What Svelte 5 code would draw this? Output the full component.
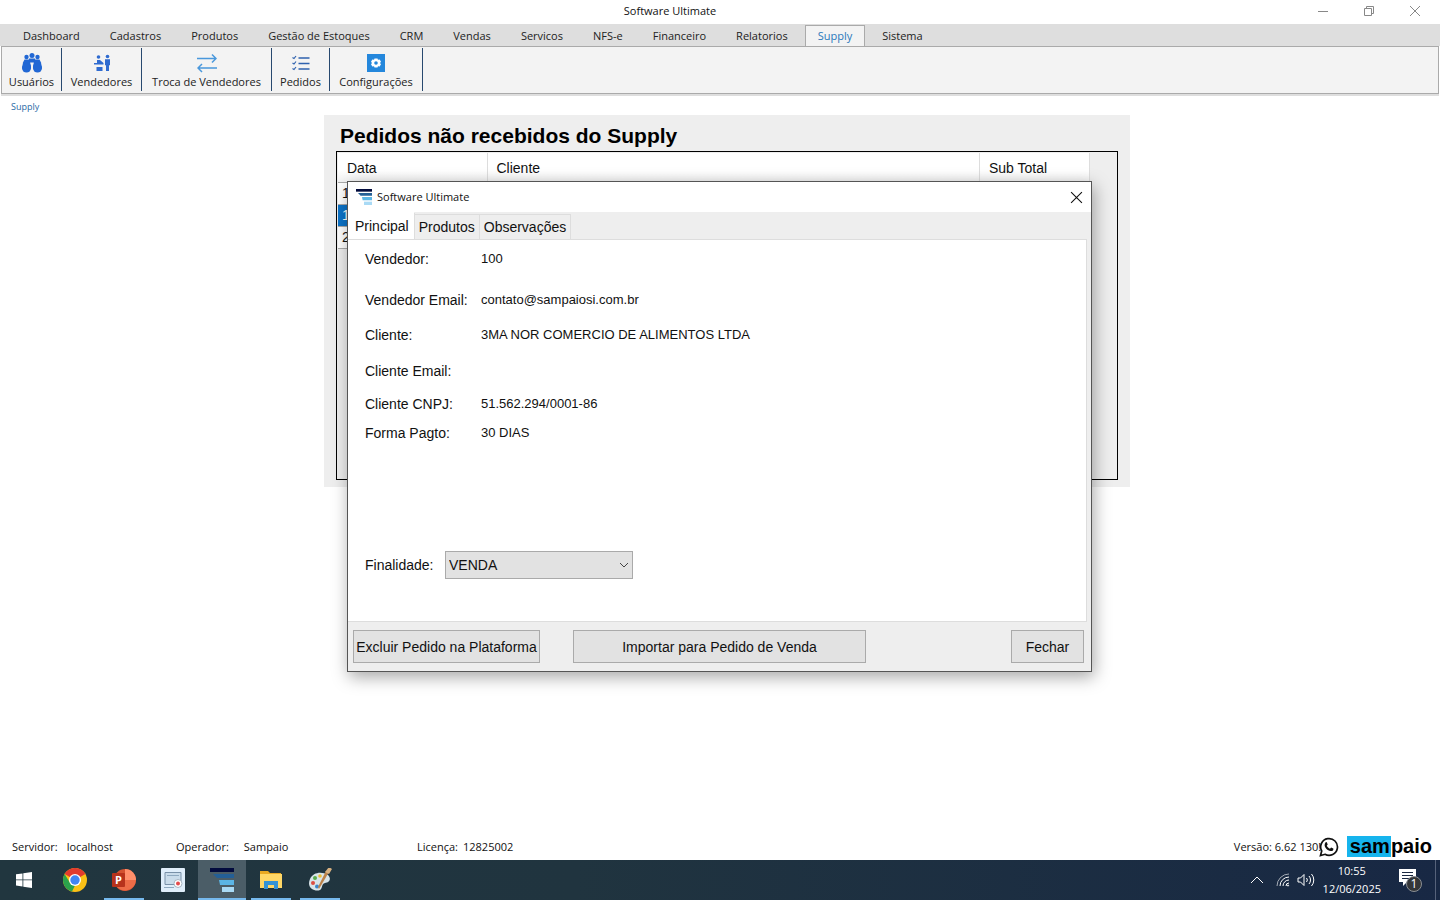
<script lang="ts">
	type Order = { date: string; client: string; subtotal: string }

	const menus = [
		'Dashboard',
		'Cadastros',
		'Produtos',
		'Gestão de Estoques',
		'CRM',
		'Vendas',
		'Servicos',
		'NFS-e',
		'Financeiro',
		'Relatorios',
		'Supply',
		'Sistema'
	]

	const tools = ['Usuários', 'Vendedores', 'Troca de Vendedores', 'Pedidos', 'Configurações']

	const orders: Order[] = [
		{ date: '1', client: '', subtotal: '' },
		{ date: '1', client: '', subtotal: '' },
		{ date: '2', client: '', subtotal: '' }
	]

	const fields = [
		['Vendedor:', '100'],
		['Vendedor Email:', 'contato@sampaiosi.com.br'],
		['Cliente:', '3MA NOR COMERCIO DE ALIMENTOS LTDA'],
		['Cliente Email:', ''],
		['Cliente CNPJ:', '51.562.294/0001-86'],
		['Forma Pagto:', '30 DIAS']
	]

	const tabs = ['Principal', 'Produtos', 'Observações']

	let activeMenu = $state('Supply')
	let activeTab = $state('Principal')
	let selected = $state(1)
	let open = $state(true)
	let purpose = $state('VENDA')
</script>

{#snippet appLogo()}
	<svg class="app-logo" viewBox="0 0 24 24" aria-hidden="true">
		<path fill="#020b3d" d="M0 0h24v4H0z" />
		<path fill="#245f96" d="M3 6h21v4H7z" />
		<path fill="#5bb5e5" d="M9 12h15v5H10z" />
		<path fill="#a9daf5" d="M12 19h12v5H12z" />
	</svg>
{/snippet}

<div class="screen">
	<header class="titlebar">
		<h1>Software Ultimate</h1>
		<div class="window-controls">
			<button aria-label="Minimizar">
				<svg viewBox="0 0 12 12"><path d="M1 6.5h10" /></svg>
			</button>
			<button aria-label="Restaurar">
				<svg viewBox="0 0 12 12"><path d="M1.5 3.5h7v7h-7zM3.5 3.5v-2h7v7h-2" /></svg>
			</button>
			<button aria-label="Fechar janela">
				<svg viewBox="0 0 12 12"><path d="M1 1l10 10M11 1L1 11" /></svg>
			</button>
		</div>
	</header>

	<nav class="menu">
		{#each menus as menu}
			<button class:active={menu === activeMenu} onclick={() => (activeMenu = menu)}>{menu}</button>
		{/each}
	</nav>

	<div class="toolbar">
		{#each tools as tool, i}
			<button>
				{#if i === 0}
					<svg viewBox="0 0 20 20" fill="#2167d4">
						<circle cx="4.5" cy="4" r="2.2" />
						<circle cx="10" cy="2.6" r="2.5" />
						<circle cx="15.5" cy="4" r="2.2" />
						<path d="M7 5.5h6v5l-1.5-1h-3L7 10.5z" />
						<path d="M2.5 6.5H7l2 6v3H0l1-6z" />
						<path d="M17.5 6.5H13l-2 6v3h9l-1-6z" />
						<circle cx="4.5" cy="15" r="4.5" />
						<circle cx="15.5" cy="15" r="4.5" />
					</svg>
				{:else if i === 1}
					<svg viewBox="0 0 20 20" fill="#2f6bd0">
						<circle cx="6.5" cy="4" r="1.8" />
						<path d="M5 7h3l3.5 3v1.5H2V10h3zM4.5 14h6v4h-6z" />
						<circle cx="15.5" cy="3.5" r="1.8" />
						<path d="M13 6.2h5v6h-1V18h-3v-5.8h-1z" />
					</svg>
				{:else if i === 2}
					<svg viewBox="0 0 20 20" fill="none" stroke="#4a98dc" stroke-width="1.5">
						<path d="M0 5.5h19M15 1.5l4 4-4 4M20 15H1M5 11l-4 4 4 4" />
					</svg>
				{:else if i === 3}
					<svg viewBox="0 0 20 20" fill="none" stroke="#2f62ae" stroke-width="1.6">
						<path d="M7.5 5h11M7.5 10.5h11M7.5 16h11" />
						<path d="M1.5 4.5l1.5 1 2-2.5M1.5 10l1.5 1 2-2.5M1.5 15.5l1.5 1 2-2.5" stroke-width="1.2" />
					</svg>
				{:else}
					<svg viewBox="0 0 20 20">
						<path fill="#2487dc" d="M1 1h18v18H1z" />
						<path fill="#fff" d="M8.5 5.500h3l.5 1.200 1.700-.2L15 8.800 14 10l1 1.200-1.300 2.300-1.700-.2-.5 1.200h-3L8 13.300l-1.700.2L5 11.200 6 10 5 8.800l1.300-2.300 1.700.2z" />
						<circle cx="10" cy="10" r="1.8" fill="#2487dc" />
					</svg>
				{/if}
				<span>{tool}</span>
			</button>
		{/each}
	</div>

	<main>
		<a class="crumb" href="#supply">Supply</a>

		<section class="orders">
			<h2>Pedidos não recebidos do Supply</h2>
			<div class="grid-box">
				<table>
					<thead>
						<tr>
							<th class="date">Data</th>
							<th>Cliente</th>
							<th class="subtotal">Sub Total</th>
						</tr>
					</thead>
					<tbody>
						{#each orders as order, i}
							<tr class:selected={i === selected} onclick={() => (selected = i)}>
								<td>{order.date}</td>
								<td>{order.client}</td>
								<td>{order.subtotal}</td>
							</tr>
						{/each}
					</tbody>
				</table>
			</div>
		</section>
	</main>

	<footer class="status">
		<dl>
			<div class="server"><dt>Servidor:</dt><dd>localhost</dd></div>
			<div class="operator"><dt>Operador:</dt><dd>Sampaio</dd></div>
			<div class="license"><dt>Licença:</dt><dd>12825002</dd></div>
		</dl>
		<span class="version">Versão: 6.62 130!</span>
		<svg class="whatsapp" viewBox="0 0 20 20" aria-label="WhatsApp" role="img">
			<path d="M1.5 18.5l1.200-4.500a8.400 8.400 0 1 1 3.300 3.300z" fill="#fff" stroke="#111" stroke-width="1.7" />
			<path d="M6.5 5.500c.8-.8 1.300-.3 1.500.3l.7 1.700-.9 1.300c.7 1.400 1.800 2.300 3.200 2.900l1.100-1.200 2.200 1c.6 1.900-1.300 2.800-2.700 2.500-3.200-.6-5.700-3.200-6-5.800 0-1.100.3-2.100.9-2.700z" fill="#111" />
		</svg>
		<span class="brand"><b>sam</b>paio</span>
	</footer>

	<div class="taskbar">
		<button class="start" aria-label="Iniciar">
			<svg viewBox="0 0 16 16" fill="#fff">
				<path d="M0 2.300l6.500-.9v6.100H0zM7.300 1.300L16 0v7.500H7.300zM0 8.300h6.500v6.200L0 13.600zM7.300 8.300H16V16l-8.700-1.300z" />
			</svg>
		</button>
		<button aria-label="Chrome">
			<svg viewBox="0 0 24 24">
				<circle cx="12" cy="12" r="12" fill="#fbc116" />
				<path d="M12 12L1.600 6A12 12 0 0 1 22.400 6z" fill="#e33b2e" />
				<path d="M1.600 6l5.800 9.500 4.600 2-3 6.100A12 12 0 0 1 1.600 6z" fill="#2ba24c" />
				<circle cx="12" cy="12" r="6" fill="#fff" />
				<circle cx="12" cy="12" r="4.7" fill="#4285f4" />
			</svg>
		</button>
		<button class="running" aria-label="PowerPoint">
			<svg viewBox="0 0 24 24">
				<circle cx="13" cy="12" r="11" fill="#d35230" />
				<path d="M13 1a11 11 0 0 1 11 11H13z" fill="#ff8f6b" />
				<path d="M13 12h11a11 11 0 0 1-21 4z" fill="#ed6c47" />
				<rect y="5" width="13" height="14" rx="1" fill="#b7331c" />
				<text x="3" y="16" fill="#fff" font-size="11" font-weight="700">P</text>
			</svg>
		</button>
		<button aria-label="Captura">
			<svg viewBox="0 0 24 24">
				<rect width="24" height="24" rx="1" fill="#dfeefa" />
				<path d="M4 4.500h16v12H4z" fill="#c9dcea" stroke="#7891a8" />
				<path d="M6 7.500h12M3 19.500h10" stroke="#8ea9bf" />
				<circle cx="17" cy="15.5" r="4" fill="#fff" stroke="#a5b4c2" />
				<circle cx="17" cy="15.5" r="2" fill="#e34b4b" />
			</svg>
		</button>
		<button class="running current" aria-label="Software Ultimate">{@render appLogo()}</button>
		<button class="running" aria-label="Explorador">
			<svg viewBox="0 0 24 24">
				<path d="M1 3h8l2 2h11v4H1z" fill="#e9a922" />
				<path d="M1 6h22v14H1z" fill="#ffd766" />
				<path d="M5 21v-8h14v8h-4v-4H9v4z" fill="#3493d5" />
			</svg>
		</button>
		<button class="running" aria-label="Paint">
			<svg viewBox="0 0 24 24">
				<path d="M2 11C5 4 14 3 20 7c4 4 1 8-3 8-4 1-2 5-5 7-5 2-14-2-10-11z" fill="#d8e4e9" />
				<circle cx="7" cy="10" r="2" fill="#59ac4c" />
				<circle cx="12" cy="8" r="1.8" fill="#efbd32" />
				<circle cx="5" cy="15" r="2" fill="#dc4d42" />
				<circle cx="9" cy="18.5" r="2" fill="#3d86cd" />
				<path d="M21 4L11 21l-1-2L18 3z" fill="#bc8249" />
				<path d="M17 4l4-5 3 2-3 5z" fill="#d7b080" />
			</svg>
		</button>

		<div class="tray">
			<svg class="chevron" viewBox="0 0 12 12"><path d="M0 9l6-6 6 6" /></svg>
			<svg class="network" viewBox="0 0 14 14">
				<path d="M1 13A12 12 0 0 1 13 1" opacity=".6" />
				<path d="M4 13a9 9 0 0 1 9-9M7 13a6 6 0 0 1 6-6M10 13a3 3 0 0 1 3-3" />
				<circle cx="12" cy="12.5" r=".6" />
			</svg>
			<svg class="sound" viewBox="0 0 18 14">
				<path d="M1 5h2.500L7 1.500v11L3.500 9H1zM9.500 5a3 3 0 0 1 0 4M12 3a6 6 0 0 1 0 8M14.500 1a9 9 0 0 1 0 12" />
			</svg>
			<time datetime="2025-06-12T10:55">10:55<br />12/06/2025</time>
			<button class="notices" aria-label="Notificações">
				<svg viewBox="0 0 24 24">
					<path d="M0 1h17v13H8l-4 4v-4H0z" fill="#fff" />
					<path d="M3 4.500h11M3 7.500h11M3 10.500h7" stroke="#1b2942" />
					<circle cx="15" cy="16" r="7.5" fill="#343638" stroke="#8b8f94" />
					<text x="15" y="20" fill="#fff" font-size="12" text-anchor="middle">1</text>
				</svg>
			</button>
			<button class="show-desktop" aria-label="Mostrar área de trabalho"></button>
		</div>
	</div>

	{#if open}
		<div class="dialog" role="dialog" aria-labelledby="dialog-title">
			<div class="dialog-title">
				{@render appLogo()}
				<span id="dialog-title">Software Ultimate</span>
				<button aria-label="Fechar diálogo" onclick={() => (open = false)}>
					<svg viewBox="0 0 12 12"><path d="M1 1l10 10M11 1L1 11" /></svg>
				</button>
			</div>

			<div class="tabs" role="tablist">
				{#each tabs as tab}
					<button
						role="tab"
						aria-selected={tab === activeTab}
						class:active={tab === activeTab}
						onclick={() => (activeTab = tab)}>{tab}</button
					>
				{/each}
			</div>

			<div class="panel" role="tabpanel">
				{#if activeTab === 'Principal'}
					<dl class="fields">
						{#each fields as [name, value]}
							<dt>{name}</dt>
							<dd>{value}</dd>
						{/each}
					</dl>
					<div class="purpose">
						<label for="purpose">Finalidade:</label>
						<div class="select">
							<select id="purpose" bind:value={purpose}>
								<option>VENDA</option>
							</select>
							<svg viewBox="0 0 10 10"><path d="M1 3l4 4 4-4" /></svg>
						</div>
					</div>
				{/if}
			</div>

			<div class="actions">
				<button class="remove">Excluir Pedido na Plataforma</button>
				<button class="import">Importar para Pedido de Venda</button>
				<button class="close" onclick={() => (open = false)}>Fechar</button>
			</div>
		</div>
	{/if}
</div>

<style>
	:global(body) {
		margin: 0;
	}

	.screen {
		position: relative;
		display: flex;
		flex-direction: column;
		min-height: 100vh;
		background: #fff;
		color: #111;
		font: 11px/16px 'Open Sans', 'Noto Sans', sans-serif;
	}

	.screen * {
		box-sizing: border-box;
	}

	button {
		margin: 0;
		padding: 0;
		border: 0;
		background: none;
		color: inherit;
		font: inherit;
	}

	dl,
	dd,
	h1,
	h2 {
		margin: 0;
	}

	svg {
		display: block;
		flex: none;
	}

	.titlebar {
		display: flex;
		align-items: center;
		height: 24px;
		padding: 0 2px 2px 40px;
	}

	.titlebar h1 {
		flex: 1;
		font-size: 11px;
		font-weight: 400;
		text-align: center;
	}

	.window-controls {
		display: flex;
	}

	.window-controls button {
		display: grid;
		place-items: center;
		width: 46px;
		height: 22px;
	}

	.window-controls svg {
		width: 12px;
		fill: none;
		stroke: #888;
	}

	.menu {
		display: flex;
		height: 22px;
		padding: 1px 8px 0;
		background: #dedede;
		color: #222;
	}

	.menu button {
		padding: 0 15px;
		white-space: nowrap;
	}

	.menu .active {
		margin: 0 2px;
		padding: 0 12px;
		border: 1px solid #aaa;
		border-bottom: 0;
		background: #f3f3f3;
		color: #2a79bb;
	}

	.toolbar {
		display: grid;
		grid-template-columns: 60px 80px 130px 58px 93px;
		height: 48px;
		margin: 0 1px;
		padding: 1px 0 2px;
		border: 1px solid #aaa;
		background: #f3f3f3;
		box-shadow: 0 2px #dedede;
		color: #222;
	}

	.toolbar button {
		display: flex;
		flex-direction: column;
		align-items: center;
		justify-content: flex-end;
		gap: 1px;
		padding-bottom: 1px;
		border-right: 1px solid #28496f;
		white-space: nowrap;
	}

	.toolbar svg {
		width: 20px;
		height: 20px;
	}

	main {
		display: flex;
		flex: 1;
		flex-direction: column;
		padding: 5px 11px 0;
	}

	.crumb {
		color: #2a6aa5;
		font-size: 9px;
		line-height: 16px;
		text-decoration: none;
	}

	.orders {
		align-self: center;
		width: 806px;
		max-width: 100%;
		margin-left: 14px;
		padding: 6px 12px 7px;
		background: #eee;
		font-family: 'Liberation Sans', Arial, sans-serif;
	}

	.orders h2 {
		padding-left: 4px;
		color: #000;
		font-size: 21px;
		line-height: 30px;
	}

	.grid-box {
		height: 329px;
		padding: 1px;
		border: 1px solid #000;
	}

	table {
		width: 752px;
		border-collapse: collapse;
		table-layout: fixed;
		background: #fff;
		font-size: 14px;
	}

	th {
		height: 29px;
		padding: 2px 9px 0;
		border-right: 1px solid #ddd;
		background: linear-gradient(#fff 60%, #f2f2f2);
		font-weight: 400;
		text-align: left;
	}

	.date {
		width: 149px;
	}

	.subtotal {
		width: 110px;
	}

	td {
		height: 22px;
		padding: 0 4px;
		border: 1px solid #aaa;
		border-left: 0;
	}

	.selected {
		background: #0c73c8;
		color: #fff;
	}

	.status {
		display: flex;
		align-items: center;
		height: 27px;
		padding: 0 8px 0 12px;
	}

	.status dl {
		display: flex;
		flex: 1;
	}

	.status dl div {
		display: flex;
		gap: 9px;
	}

	.status .server {
		width: 164px;
	}

	.status .operator {
		gap: 15px;
		width: 241px;
	}

	.status .license {
		gap: 5px;
	}

	.version {
		width: 85px;
		white-space: nowrap;
	}

	.whatsapp {
		width: 20px;
		height: 20px;
		margin-right: 8px;
	}

	.brand {
		display: flex;
		color: #000;
		font: 700 20px/21px 'Liberation Sans', Arial, sans-serif;
	}

	.brand b {
		padding: 0 1px 0 3px;
		background: #16b4ed;
	}

	.taskbar {
		display: flex;
		gap: 1px;
		height: 40px;
		background: linear-gradient(90deg, #21363f, #20343f 40%, #182844);
		color: #fff;
	}

	.taskbar > button {
		display: grid;
		place-items: center;
		width: 48px;
	}

	.taskbar > button svg {
		width: 24px;
		height: 24px;
	}

	.taskbar .start {
		margin-right: 2px;
	}

	.taskbar .start svg {
		width: 16px;
		height: 16px;
	}

	.taskbar .running {
		background: linear-gradient(#76b9ed, #76b9ed) bottom / 40px 2px no-repeat;
	}

	.taskbar .current {
		background: linear-gradient(#76b9ed, #76b9ed) bottom / 48px 2px no-repeat #4b5d67;
	}

	.tray {
		display: flex;
		align-items: center;
		margin-left: auto;
	}

	.tray > svg {
		fill: none;
		stroke: #fff;
	}

	.chevron {
		width: 12px;
		margin-right: 13px;
	}

	.network {
		width: 14px;
		margin-right: 7px;
	}

	.sound {
		width: 18px;
		margin-right: 8px;
	}

	time {
		line-height: 18px;
		text-align: center;
	}

	.notices {
		margin: 0 12px 0 18px;
	}

	.notices svg {
		width: 24px;
		height: 24px;
	}

	.show-desktop {
		width: 5px;
		height: 40px;
		border-left: 1px solid #56627a;
	}

	.dialog {
		position: absolute;
		top: 181px;
		left: calc(50% - 373px);
		width: 745px;
		border: 1px solid #555;
		background: #eee;
		box-shadow: 2px 5px 16px rgba(0, 0, 0, 0.35);
		font: 14px/20px 'Liberation Sans', Arial, sans-serif;
	}

	.dialog-title {
		display: flex;
		align-items: center;
		gap: 5px;
		height: 30px;
		padding: 0 8px;
		background: #fff;
		font: 11px/16px 'Open Sans', 'Noto Sans', sans-serif;
	}

	.dialog-title .app-logo {
		width: 16px;
		height: 16px;
	}

	.dialog-title button {
		margin-left: auto;
	}

	.dialog-title button svg {
		width: 13px;
		fill: none;
		stroke: #111;
	}

	.tabs {
		display: flex;
		align-items: flex-end;
		height: 27px;
	}

	.tabs button {
		height: 25px;
		padding: 0 4px;
		border: 1px solid #ddd;
		border-width: 1px 1px 0 0;
	}

	.tabs .active {
		height: 27px;
		padding: 0 5px 0 7px;
		border-top-color: #fff;
		background: #fff;
	}

	.panel {
		height: 383px;
		margin-right: 4px;
		padding: 9px 17px;
		border: 1px solid #ddd;
		border-left: 0;
		background: #fff;
	}

	.fields {
		display: grid;
		grid-template-columns: 116px 1fr;
		grid-template-rows: 41px 35px 36px 33px 29px 128px;
	}

	.fields dd {
		font-size: 13px;
	}

	.purpose {
		display: flex;
		align-items: center;
	}

	.purpose label {
		width: 80px;
	}

	.select {
		display: flex;
		align-items: center;
	}

	select {
		appearance: none;
		width: 188px;
		height: 28px;
		padding: 0 3px;
		border: 1px solid #aaa;
		border-radius: 0;
		background: #e2e2e2;
		color: #111;
		font: inherit;
	}

	.select svg {
		width: 10px;
		margin-left: -14px;
		fill: none;
		stroke: #444;
		pointer-events: none;
	}

	.actions {
		display: flex;
		gap: 33px;
		padding: 8px 7px 8px 5px;
	}

	.actions button {
		height: 33px;
		border: 1px solid #aaa;
		background: #e2e2e2;
		white-space: nowrap;
	}

	.remove {
		width: 187px;
	}

	.import {
		width: 293px;
	}

	.actions .close {
		width: 73px;
		margin-left: auto;
	}
</style>
